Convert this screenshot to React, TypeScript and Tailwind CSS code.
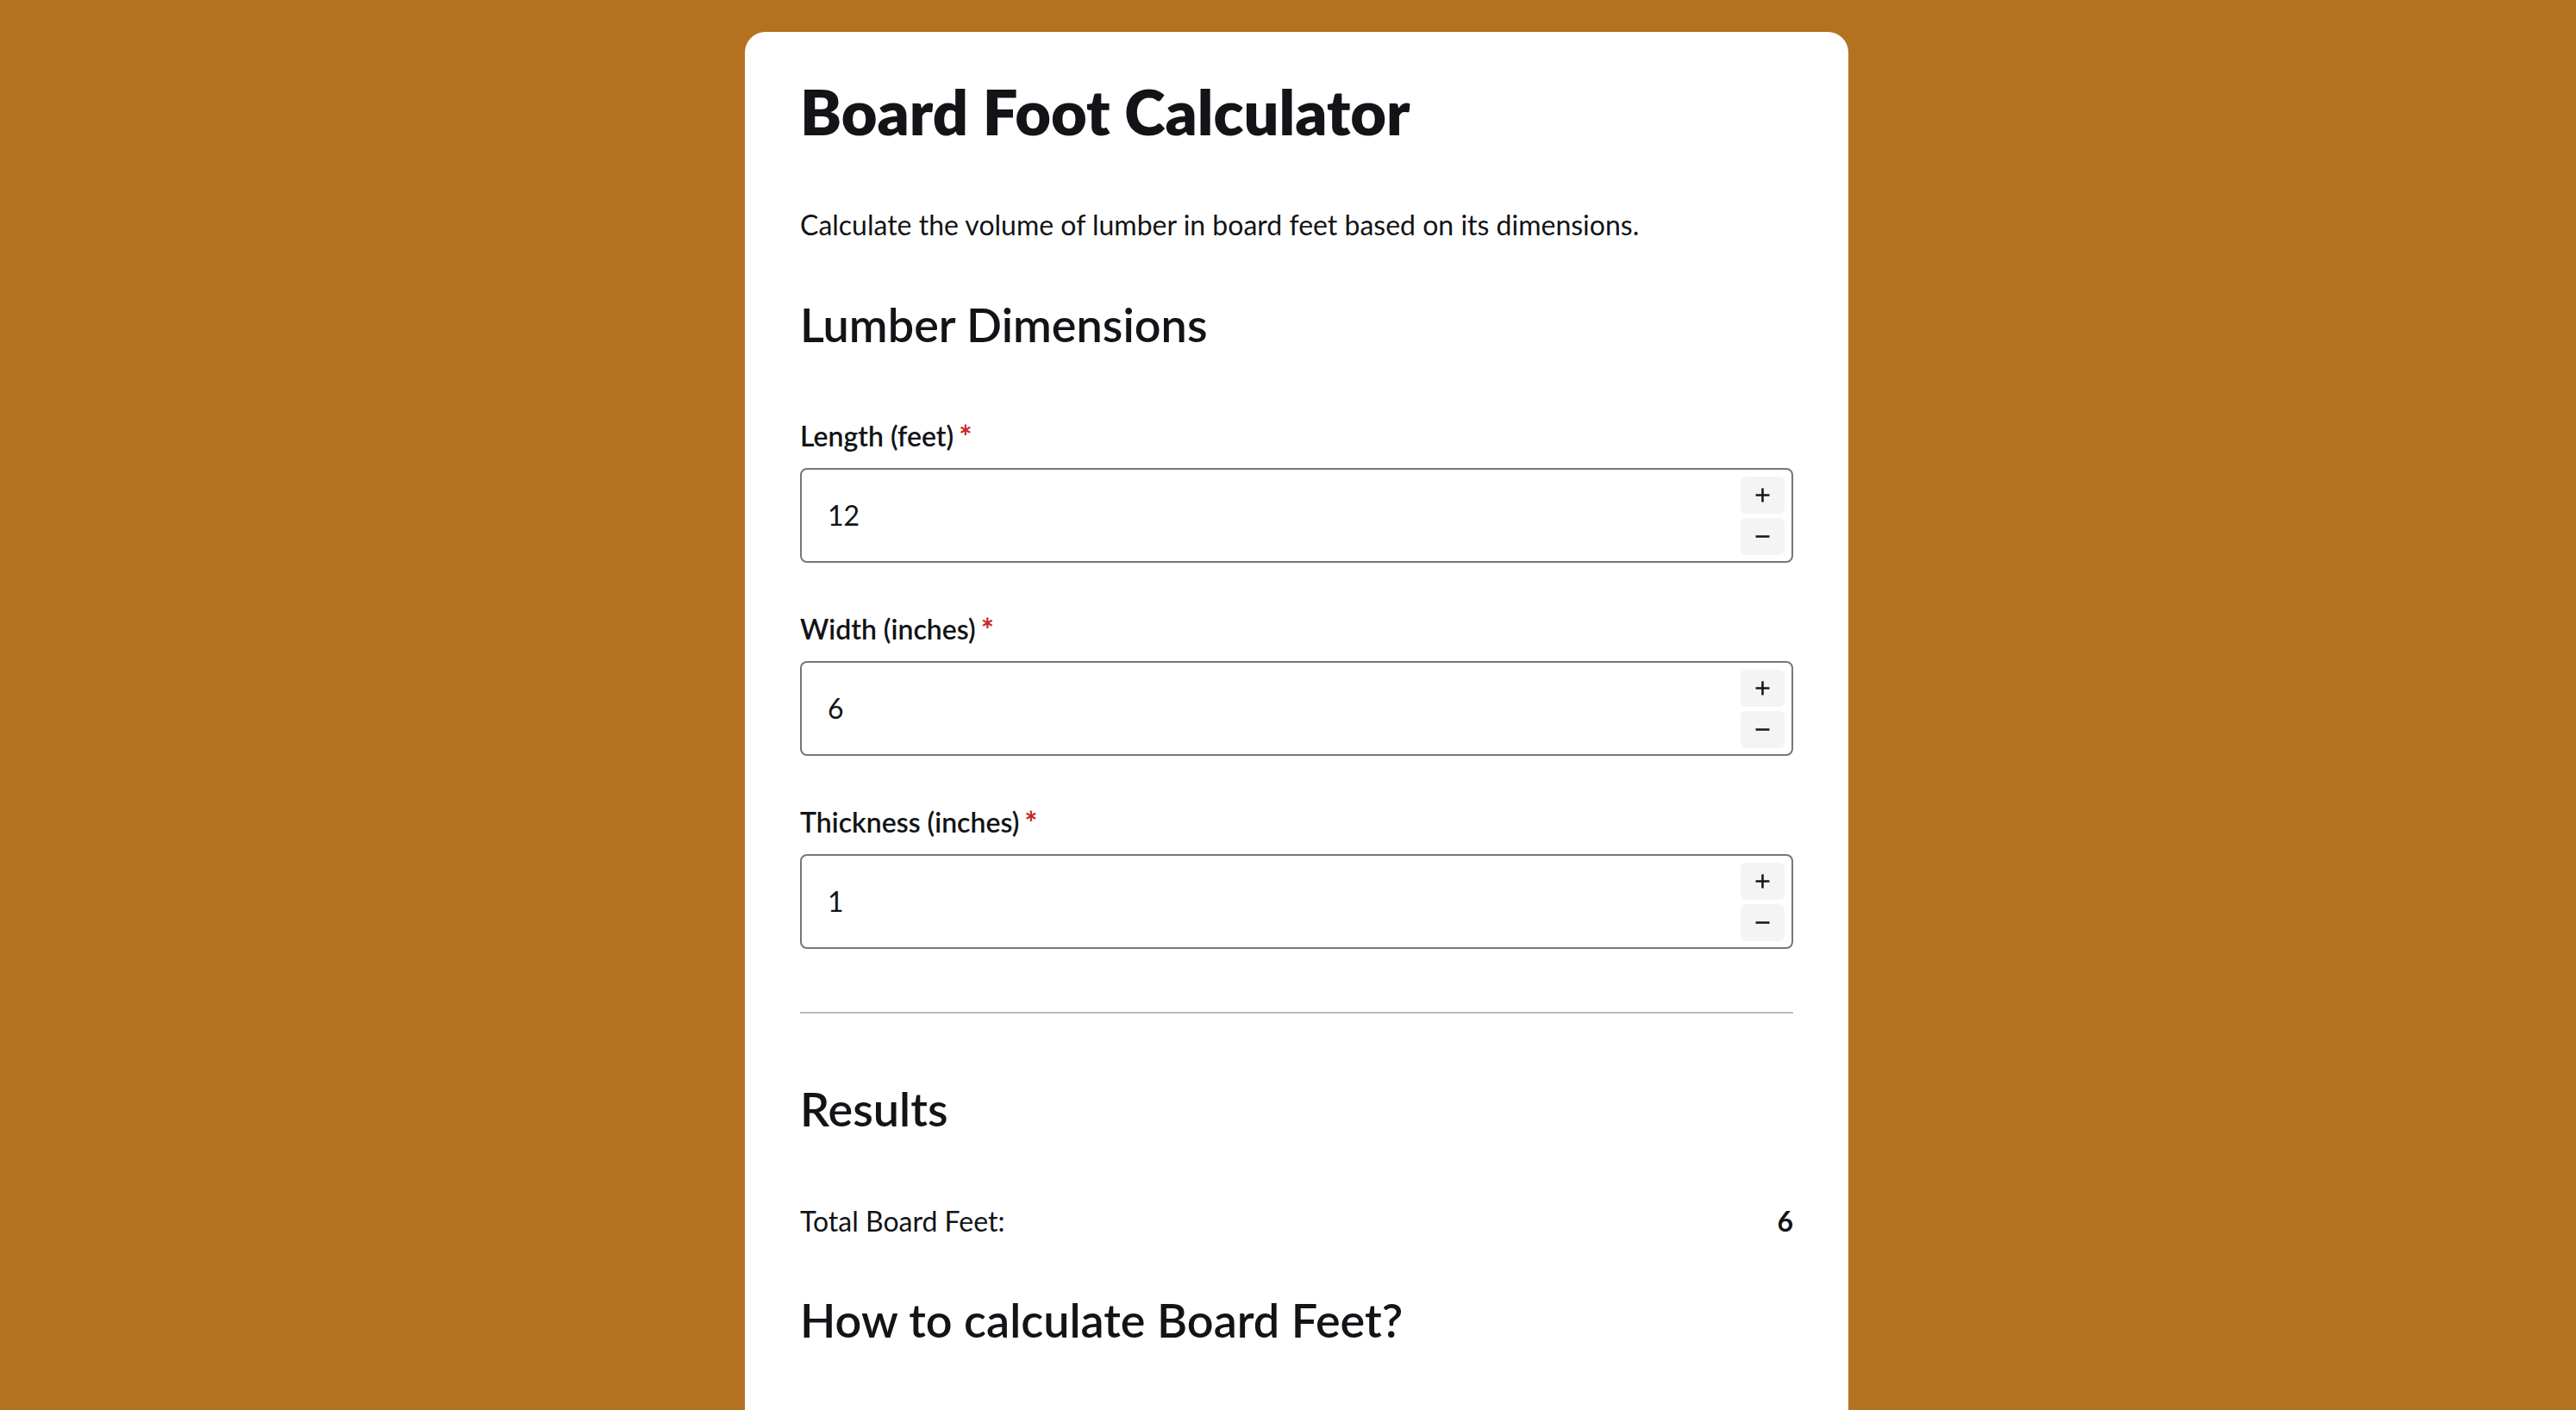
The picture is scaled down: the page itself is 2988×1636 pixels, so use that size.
import { useState } from "react";

type Field = {
  label: string;
  value: number;
};

const initialFields: Field[] = [
  { label: "Length (feet)", value: 12 },
  { label: "Width (inches)", value: 6 },
  { label: "Thickness (inches)", value: 1 },
];

function Stepper({ onUp, onDown }: { onUp: () => void; onDown: () => void }) {
  return (
    <div className="flex flex-col gap-[5px]">
      <button
        type="button"
        onClick={onUp}
        className="flex h-[43px] w-[51px] items-center justify-center rounded-[6px] bg-[#f4f4f5]"
      >
        <svg width="17" height="17" viewBox="0 0 16 16" fill="none">
          <path d="M8 0.5v15M0.5 8h15" stroke="#15171b" strokeWidth="2.4" />
        </svg>
      </button>
      <button
        type="button"
        onClick={onDown}
        className="flex h-[43px] w-[51px] items-center justify-center rounded-[6px] bg-[#f4f4f5]"
      >
        <svg width="17" height="17" viewBox="0 0 16 16" fill="none">
          <path d="M0.5 8h15" stroke="#15171b" strokeWidth="2.4" />
        </svg>
      </button>
    </div>
  );
}

function NumberField({
  field,
  onChange,
}: {
  field: Field;
  onChange: (v: number) => void;
}) {
  return (
    <div>
      <label className="block h-[40px] text-[32px] leading-[40px] font-semibold">
        {field.label}
        <span className="ml-[6px] inline-block align-top text-[36px] leading-[40px] font-bold text-[#c5282b]">*</span>
      </label>
      <div className="mt-[17px] flex h-[110px] items-center rounded-[8px] border-2 border-[#76767f] pl-[30px] pr-[8px]">
        <input
          type="text"
          value={String(field.value)}
          onChange={(e) => onChange(Number(e.target.value) || 0)}
          className="min-w-0 flex-1 bg-transparent text-[32px] leading-[40px] text-[#121417] outline-none"
        />
        <Stepper onUp={() => onChange(field.value + 1)} onDown={() => onChange(field.value - 1)} />
      </div>
    </div>
  );
}

export default function App() {
  const [fields, setFields] = useState<Field[]>(initialFields);

  const update = (i: number, v: number) => {
    setFields((prev) => prev.map((f, j) => (j === i ? { ...f, value: v } : f)));
  };

  const boardFeet = (fields[0].value * fields[1].value * fields[2].value) / 12;

  return (
    <div className="flex min-h-screen justify-center bg-[#b4711f] pl-[20px] pt-[37px] font-['Lato',sans-serif] text-[#121417]">
      <div className="w-[1280px] rounded-[24px] bg-white px-16 pb-[240px] pt-[52px]">
        <h1 className="text-[72px] leading-[80px] font-extrabold">Board Foot Calculator</h1>
        <p className="mt-[68px] text-[32px] leading-[48px]">
          Calculate the volume of lumber in board feet based on its dimensions.
        </p>

        <h2 className="mt-[60px] text-[54px] leading-[64px] font-semibold">Lumber Dimensions</h2>

        <div className="mt-[77px] flex flex-col gap-[57px]">
          {fields.map((f, i) => (
            <NumberField key={f.label} field={f} onChange={(v) => update(i, v)} />
          ))}
        </div>

        <div className="mt-[73px] h-[2px] bg-[#bdbdc1]" />

        <h2 className="mt-[79px] text-[54px] leading-[64px] font-semibold">Results</h2>
        <div className="mt-[74px] flex items-center justify-between text-[32px] leading-[48px]">
          <span>Total Board Feet:</span>
          <span className="font-bold">{Number(boardFeet.toFixed(2))}</span>
        </div>

        <h2 className="mt-[59px] text-[54px] leading-[64px] font-semibold">How to calculate Board Feet?</h2>
      </div>
    </div>
  );
}
